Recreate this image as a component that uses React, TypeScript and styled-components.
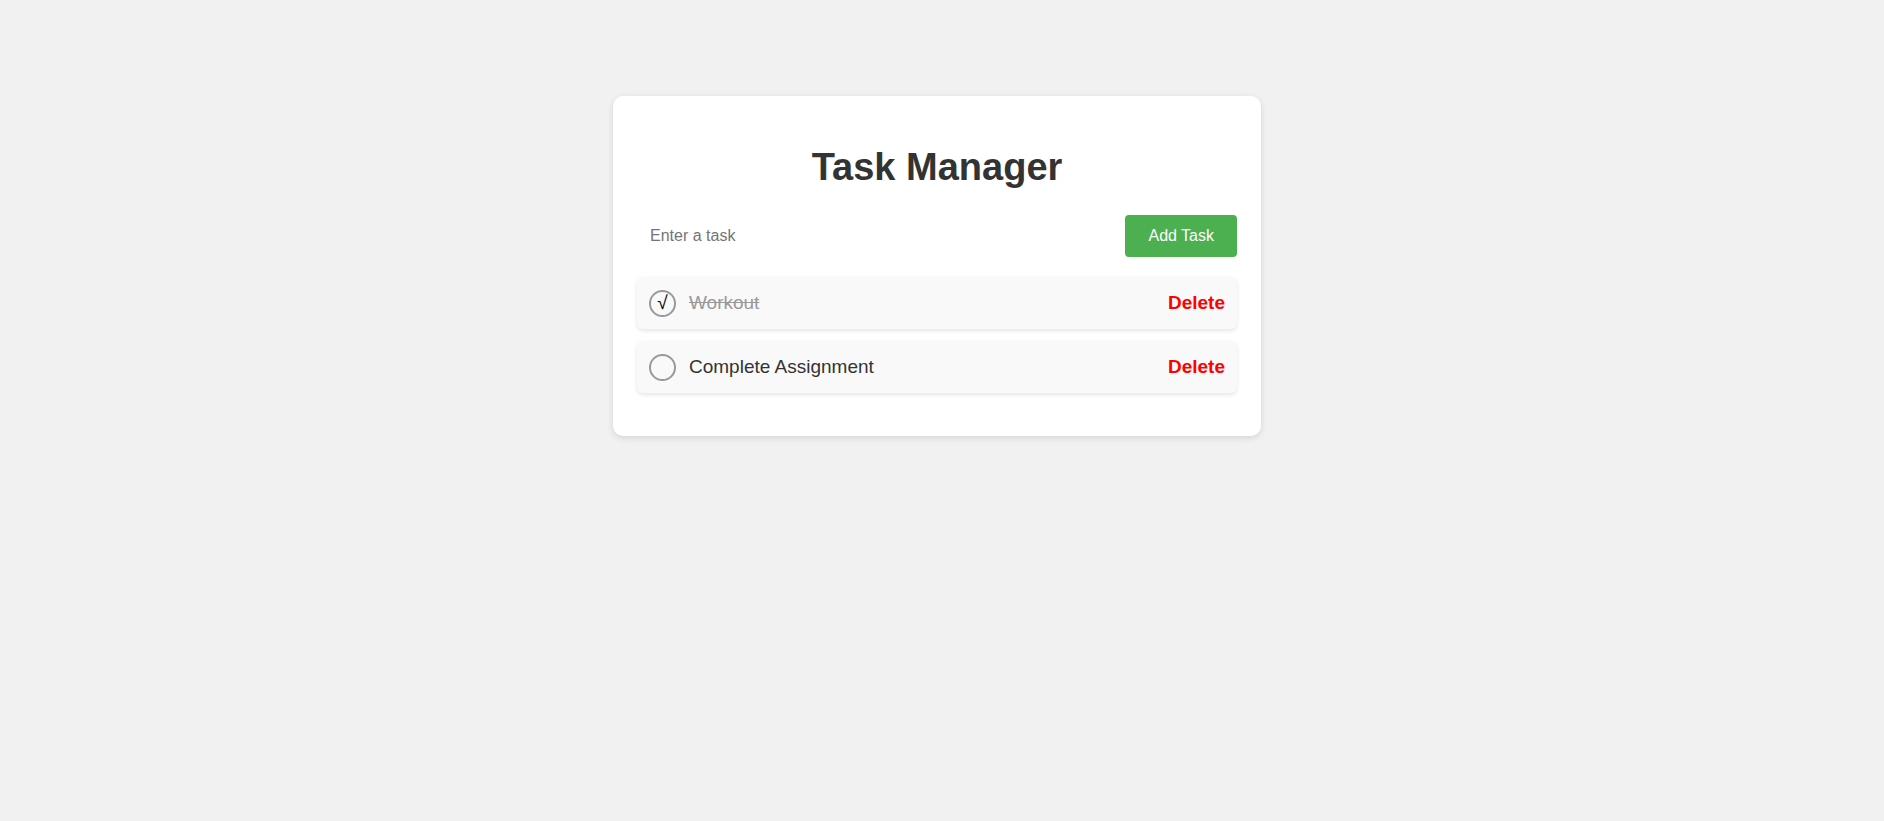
import React, { useState } from 'react'
import styled, { createGlobalStyle } from 'styled-components'

interface Task {
  id: number
  text: string
  done: boolean
}

const initialTasks: Task[] = [
  { id: 1, text: 'Workout', done: true },
  { id: 2, text: 'Complete Assignment', done: false },
]

const App: React.FC = () => {
  const [tasks, setTasks] = useState<Task[]>(initialTasks)
  const [value, setValue] = useState('')

  const addTask = () => {
    if (!value.trim()) return
    setTasks([...tasks, { id: Date.now(), text: value.trim(), done: false }])
    setValue('')
  }

  const toggle = (id: number) => setTasks(tasks.map(t => (t.id === id ? { ...t, done: !t.done } : t)))
  const remove = (id: number) => setTasks(tasks.filter(t => t.id !== id))

  return (
    <Page>
      <GlobalStyle />
      <Card>
        <Title>Task Manager</Title>
        <InputRow>
          <TaskInput placeholder="Enter a task" value={value} onChange={e => setValue(e.target.value)} />
          <AddButton onClick={addTask}>Add Task</AddButton>
        </InputRow>
        <TaskList>
          {tasks.map(task => (
            <TaskItem key={task.id}>
              <Check onClick={() => toggle(task.id)}>{task.done ? '√' : ''}</Check>
              <TaskText done={task.done}>{task.text}</TaskText>
              <DeleteButton onClick={() => remove(task.id)}>Delete</DeleteButton>
            </TaskItem>
          ))}
        </TaskList>
      </Card>
    </Page>
  )
}

export default App

const GlobalStyle = createGlobalStyle`
  html, body {
    margin: 0;
    background: #f1f1f1;
    font-family: "Liberation Sans", Arial, sans-serif;
  }
`

const Page = styled.div`
  display: flex;
  justify-content: center;
  padding: 96px 10px 0 0;
  min-height: 821px;
  box-sizing: border-box;
`

const Card = styled.div`
  width: 600px;
  padding: 24px;
  background: #fff;
  border-radius: 10px;
  box-shadow: 0 2px 6px rgba(0, 0, 0, 0.12);
  align-self: flex-start;
`

const Title = styled.h1`
  margin: 26px 0 26px;
  text-align: center;
  font-size: 38px;
  font-weight: bold;
  color: #333;
`

const InputRow = styled.div`
  display: flex;
  align-items: center;
  gap: 10px;
  margin-bottom: 20px;
`

const TaskInput = styled.input`
  flex: 1;
  padding: 12px 13px;
  border: none;
  outline: none;
  background: transparent;
  font-family: inherit;
  font-size: 16px;
  color: #333;

  &::placeholder {
    color: #757575;
  }
`

const AddButton = styled.button`
  height: 42px;
  padding: 0 23px;
  border: none;
  border-radius: 4px;
  background: #4caf50;
  color: #fff;
  font-family: inherit;
  font-size: 16px;
  cursor: pointer;
`

const TaskList = styled.ul`
  list-style: none;
  margin: 0;
  padding: 0 0 19px;
  display: flex;
  flex-direction: column;
  gap: 12px;
`

const TaskItem = styled.li`
  display: flex;
  align-items: center;
  height: 52px;
  padding: 0 12px 0 12px;
  box-sizing: border-box;
  background: #f9f9f9;
  border-radius: 6px;
  box-shadow: 0 2px 4px rgba(0, 0, 0, 0.1);
`

const Check = styled.span`
  width: 27px;
  height: 27px;
  box-sizing: border-box;
  border: 2px solid #999;
  border-radius: 50%;
  display: flex;
  align-items: center;
  justify-content: center;
  font-size: 19px;
  color: #000;
  cursor: pointer;
  flex-shrink: 0;
`

const TaskText = styled.span<{ done: boolean }>`
  flex: 1;
  margin-left: 13px;
  font-size: 19px;
  color: ${p => (p.done ? '#999' : '#333')};
  text-decoration: ${p => (p.done ? 'line-through' : 'none')};
`

const DeleteButton = styled.button`
  padding: 0;
  border: none;
  background: none;
  color: #ff0000;
  font-family: inherit;
  font-size: 19px;
  font-weight: bold;
  cursor: pointer;
`
